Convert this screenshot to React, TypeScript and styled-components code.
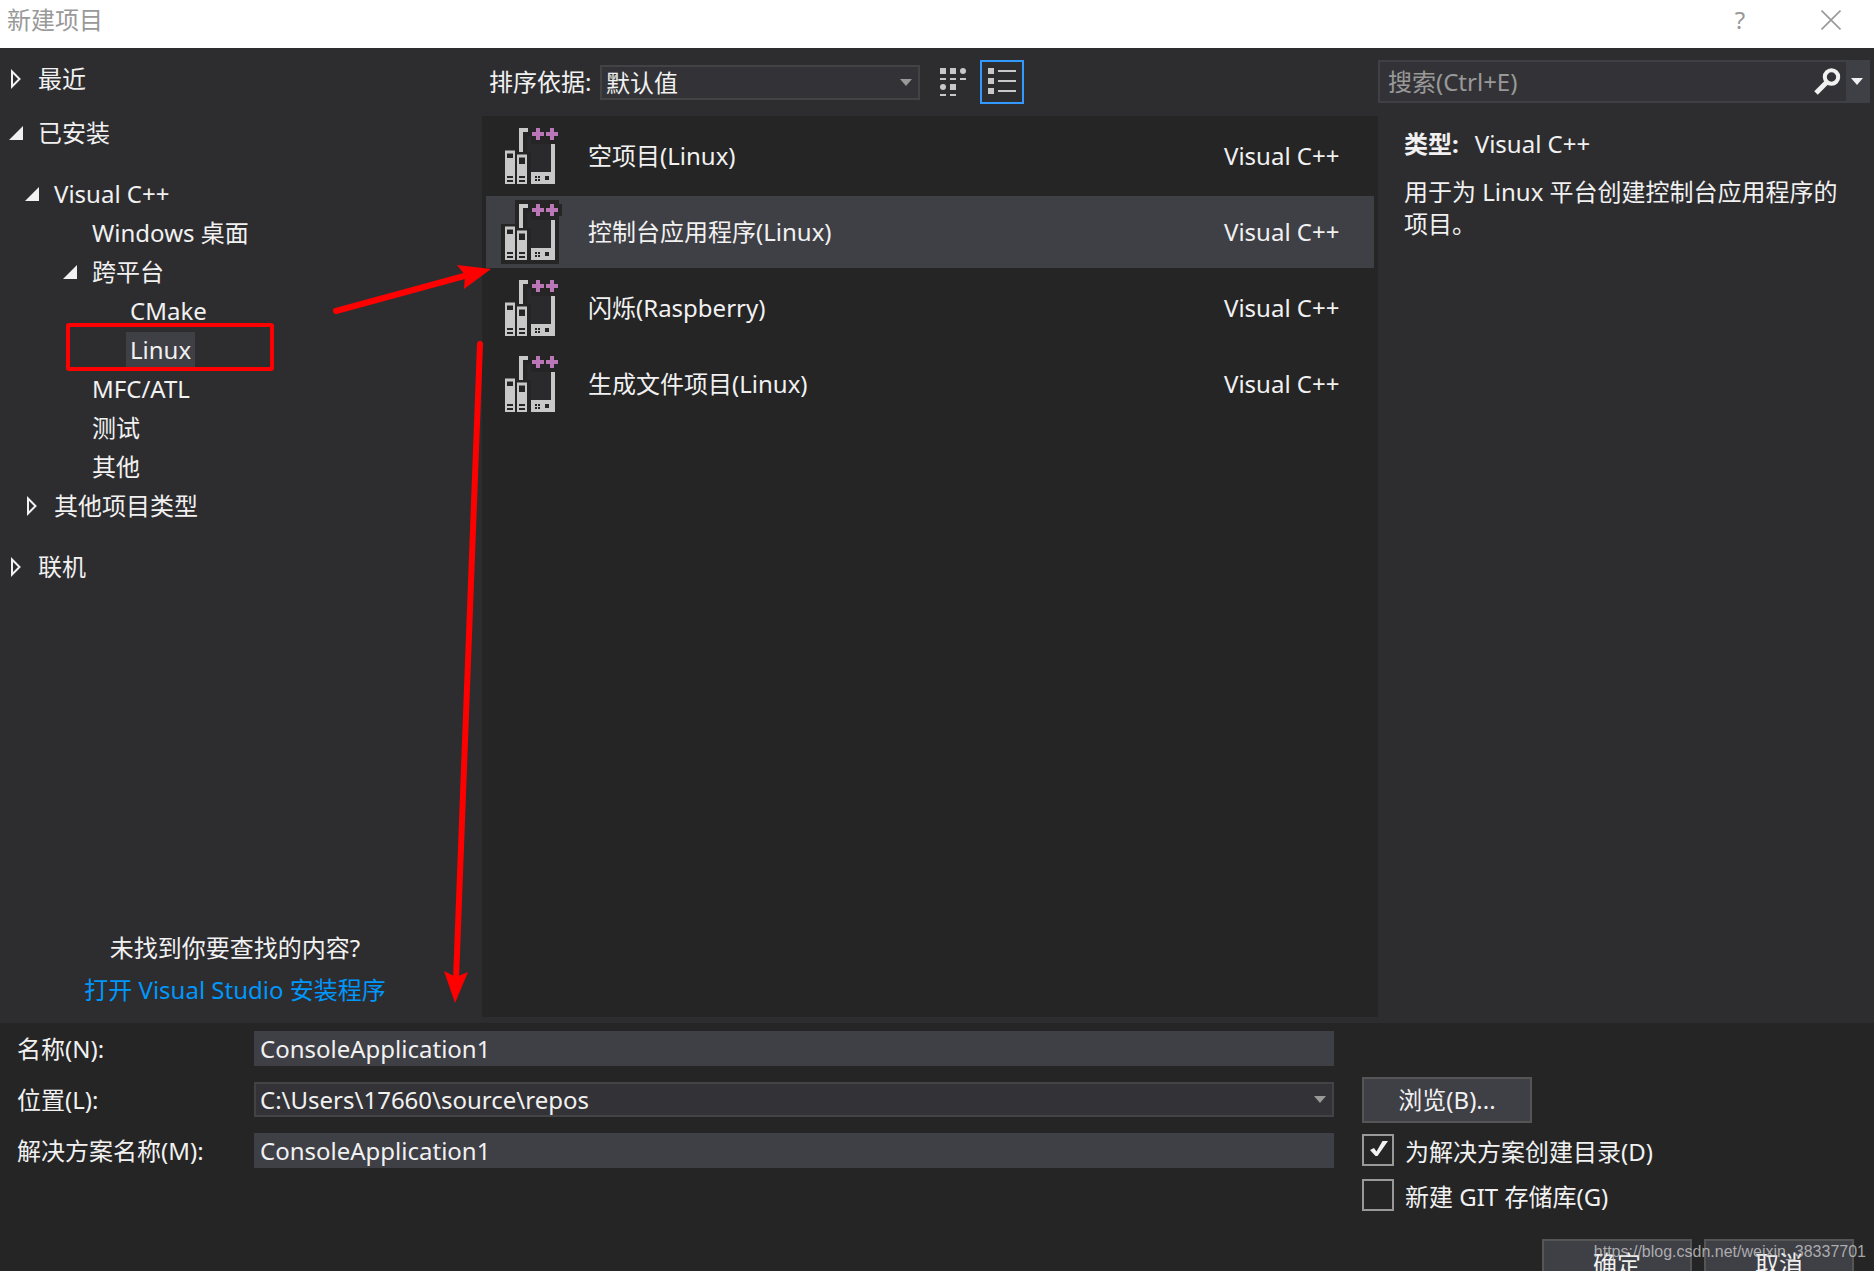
import React, { useState } from "react";
import styled, { createGlobalStyle } from "styled-components";

const c = {
  panel: "#2d2d30",
  dark: "#252526",
  field: "#333337",
  raised: "#3f3f46",
  line: "#434346",
  text: "#f1f1f1",
  dim: "#999999",
  accent: "#3399ff",
  link: "#0097fb",
  mark: "#ff0000",
};

const GlobalStyle = createGlobalStyle`
  * { box-sizing: border-box; }
  html, body { margin: 0; background: ${c.dark}; }
  body, button, input, select {
    font-family: "Noto Sans", "Noto Sans CJK SC", sans-serif;
    font-size: 24px;
    line-height: 32px;
    color: ${c.text};
  }
  button, input, select { margin: 0; padding: 0; border: 0; border-radius: 0; background: none; outline: none; }
  ul { list-style: none; margin: 0; padding: 0; }
`;

const Viewport = styled.div`
  position: relative;
  height: 100vh;
  overflow: hidden;
`;

const Dialog = styled.div`
  display: flex;
  flex-direction: column;
  height: calc(100vh + 24px);
`;

const TitleBar = styled.header`
  display: flex;
  align-items: flex-start;
  gap: 5px;
  flex: none;
  height: 48px;
  padding-left: 7px;
  background: #ffffff;
`;

const Title = styled.h1`
  flex: 1;
  margin: 0;
  padding-top: 4px;
  font-size: 24px;
  font-weight: 400;
  line-height: 32px;
  color: ${c.dim};
`;

const CaptionButton = styled.button`
  display: grid;
  place-items: center;
  width: 86px;
  height: 40px;
  color: ${c.dim};
`;

const Main = styled.main`
  display: grid;
  grid-template-columns: 470px minmax(0, 1fr) 496px;
  flex: 1;
  min-height: 0;
  background: ${c.panel};
`;

const Sidebar = styled.nav`
  display: flex;
  flex-direction: column;
  justify-content: space-between;
  padding: 4px 0 17px;
`;

const Group = styled.ul`
  padding: 14px 0 15px;
`;

const TreeRow = styled.button<{ $level: number }>`
  display: flex;
  align-items: center;
  gap: 14px;
  width: 100%;
  height: ${(p) => (p.$level === 0 ? 54 : 39)}px;
  padding-left: ${(p) => [8, 24, 62, 100][p.$level]}px;
  text-align: left;
`;

const TreeLabel = styled.span<{ $selected?: boolean }>`
  margin-left: -4px;
  padding: 2px 4px;
  background: ${(p) => (p.$selected ? c.raised : "transparent")};
`;

const Twisty = styled.svg`
  flex: none;
  width: 16px;
  height: 20px;
`;

const Hint = styled.div`
  display: flex;
  flex-direction: column;
  align-items: center;
  gap: 10px;
`;

const Link = styled.a`
  color: ${c.link};
  text-decoration: none;
`;

const Center = styled.section`
  display: flex;
  flex-direction: column;
  padding: 12px 0 6px 12px;
`;

const Toolbar = styled.div`
  display: flex;
  align-items: center;
  height: 44px;
  margin-bottom: 12px;
  padding-left: 7px;
`;

const SortLabel = styled.label`
  width: 111px;
  white-space: nowrap;
`;

const Combo = styled.span<{ $width?: string }>`
  display: grid;
  align-items: center;
  width: ${(p) => p.$width ?? "auto"};
  height: 35px;
  border: 2px solid ${c.line};
  background: ${c.field};
  > * { grid-area: 1 / 1; }
  > svg { justify-self: end; margin-right: 6px; pointer-events: none; }
`;

const Select = styled.select`
  appearance: none;
  width: 100%;
  height: 31px;
  padding: 0 24px 0 4px;
`;

const ViewButton = styled.button<{ $active?: boolean }>`
  display: grid;
  place-items: center;
  width: 44px;
  height: 44px;
  border: 2px solid ${(p) => (p.$active ? c.accent : "transparent")};
`;

const ViewButtons = styled.div`
  display: flex;
  gap: 4px;
  margin-left: 12px;
`;

const Templates = styled.ul`
  display: flex;
  flex-direction: column;
  flex: 1;
  gap: 4px;
  padding: 4px;
  background: ${c.dark};
`;

const Template = styled.button<{ $selected: boolean }>`
  display: flex;
  align-items: center;
  width: 100%;
  height: 72px;
  padding: 0 26px 0 12px;
  background: ${(p) => (p.$selected ? c.raised : "transparent")};
`;

const TemplateName = styled.span`
  flex: 1;
  margin-left: 26px;
  text-align: left;
`;

const TemplateKind = styled.span`
  width: 124px;
  text-align: left;
`;

const Details = styled.aside`
  padding: 12px 4px 0 0;
`;

const Search = styled.form`
  display: flex;
  align-items: stretch;
  height: 43px;
  border: 2px solid ${c.raised};
  background: ${c.field};
`;

const SearchInput = styled.input`
  flex: 1;
  min-width: 0;
  padding-left: 8px;
  &::placeholder { color: ${c.dim}; opacity: 1; }
`;

const SearchButton = styled.button<{ $menu?: boolean }>`
  display: grid;
  place-items: center;
  width: ${(p) => (p.$menu ? 22 : 38)}px;
  background: ${(p) => (p.$menu ? c.raised : "transparent")};
`;

const Info = styled.div`
  padding: 25px 26px 0;
`;

const Kind = styled.p`
  display: flex;
  gap: 16px;
  margin: 0 0 16px;
`;

const Description = styled.p`
  margin: 0;
`;

const Footer = styled.footer`
  flex: none;
  padding: 8px 20px 6px 17px;
  background: ${c.dark};
`;

const Form = styled.form`
  display: grid;
  grid-template-columns: 237px minmax(0, 1fr) 520px;
`;

const Fields = styled.div`
  display: grid;
  grid-column: 1 / 3;
  grid-template-columns: subgrid;
  grid-auto-rows: 35px;
  row-gap: 16px;
  align-items: center;
`;

const TextField = styled.input`
  width: 100%;
  height: 35px;
  padding: 0 6px;
  background: ${c.raised};
`;

const Options = styled.div`
  display: flex;
  flex-direction: column;
  align-items: flex-start;
  gap: 7px;
  padding: 46px 0 0 28px;
`;

const PushButton = styled.button<{ $width: number; $height: number }>`
  width: ${(p) => p.$width}px;
  height: ${(p) => p.$height}px;
  border: 2px solid #555555;
  background: ${c.raised};
`;

const CheckLabel = styled.label`
  display: flex;
  align-items: flex-start;
  gap: 11px;
  height: 38px;
  padding-top: 4px;
  line-height: 36px;
`;

const CheckBox = styled.span`
  display: grid;
  > * { grid-area: 1 / 1; }
  > svg { pointer-events: none; }
`;

const CheckInput = styled.input`
  appearance: none;
  width: 32px;
  height: 32px;
  border: 2px solid ${c.dim};
`;

const Actions = styled.div`
  display: flex;
  justify-content: flex-end;
  gap: 12px;
  margin-top: 26px;
`;

const Markup = styled.svg`
  position: absolute;
  top: 0;
  left: 0;
  width: 500px;
  height: 1010px;
  pointer-events: none;
`;

const Watermark = styled.span`
  position: absolute;
  right: 8px;
  bottom: 9px;
  font-family: "Liberation Sans", Arial, sans-serif;
  font-size: 16px;
  line-height: 20px;
  color: rgba(210, 210, 210, 0.75);
`;

const DownArrow = ({ color = c.dim }: { color?: string }) => (
  <svg width="12" height="7" viewBox="0 0 12 7" aria-hidden="true">
    <path d="M0 0H12L6 7Z" fill={color} />
  </svg>
);

const TemplateIcon = () => (
  <svg width="64" height="64" viewBox="0 0 64 64" shapeRendering="crispEdges" aria-hidden="true">
    <path d="M17 0H61V4H64V16H61V64H3V24H17Z" fill={c.dark} />
    <path d="M29 12H33V20H53V48H33V28H29Z" fill="#2a2a2c" />
    <path
      d="M21 4H30V8H25V28H21Z M7 27H17V60H7Z M19 31H29V60H19Z M53 20H57V60H33V48H53Z"
      fill="#c8c8c8"
    />
    <path
      d="M9 30H15V34H9Z M9 52H15V54H9Z M9 56H15V58H9Z M21 34H27V40H21Z M21 52H27V54H21Z M21 56H27V58H21Z M37 52H39V54H37Z M40 52H42V54H40Z M37 55H39V57H37Z M40 55H42V57H40Z M47 52H51V56H47Z"
      fill={c.dark}
    />
    <path d="M9 29H15V30H9Z M21 33H27V34H21Z M7 26H17V27H7Z M19 30H29V31H19Z" fill="#777777" />
    <path
      d="M38 4H42V8H46V12H42V16H38V12H34V8H38Z M52 4H56V8H60V12H56V16H52V12H48V8H52Z"
      fill="#bb76b8"
    />
  </svg>
);

type Node = { label: string; level: number; open?: boolean };

const TreeItem = ({ node, selected, onSelect }: { node: Node; selected: boolean; onSelect: (s: string) => void }) => (
  <li>
    <TreeRow type="button" $level={node.level} aria-expanded={node.open} onClick={() => onSelect(node.label)}>
      <Twisty viewBox="0 0 16 20" aria-hidden="true">
        {node.open === true && <path d="M15 3V17H1Z" fill={c.text} />}
        {node.open === false && <path d="M4 2.5V17.5L11.5 10Z" fill="none" stroke={c.text} strokeWidth="2" />}
      </Twisty>
      <TreeLabel $selected={selected}>{node.label}</TreeLabel>
    </TreeRow>
  </li>
);

const installed: Node[] = [
  { label: "Visual C++", level: 1, open: true },
  { label: "Windows 桌面", level: 2 },
  { label: "跨平台", level: 2, open: true },
  { label: "CMake", level: 3 },
  { label: "Linux", level: 3 },
  { label: "MFC/ATL", level: 2 },
  { label: "测试", level: 2 },
  { label: "其他", level: 2 },
  { label: "其他项目类型", level: 1, open: false },
];

const templates = ["空项目(Linux)", "控制台应用程序(Linux)", "闪烁(Raspberry)", "生成文件项目(Linux)"];

const Check = ({ label, on }: { label: string; on: boolean }) => {
  const [checked, setChecked] = useState(on);
  return (
    <CheckLabel>
      <CheckBox>
        <CheckInput type="checkbox" checked={checked} onChange={() => setChecked(!checked)} />
        {checked && (
          <svg width="32" height="32" viewBox="0 0 32 32" aria-hidden="true">
            <path d="M8 16L12 14L14.500 17.500L20.500 7H26L15.500 22H13.500Z" fill={c.text} />
          </svg>
        )}
      </CheckBox>
      {label}
    </CheckLabel>
  );
};

export default function App() {
  const [node, setNode] = useState("Linux");
  const [template, setTemplate] = useState(1);
  const item = (n: Node) => <TreeItem key={n.label} node={n} selected={node === n.label} onSelect={setNode} />;

  return (
    <Viewport>
      <GlobalStyle />
      <Dialog>
        <TitleBar>
          <Title>新建项目</Title>
          <CaptionButton type="button">?</CaptionButton>
          <CaptionButton type="button" aria-label="关闭">
            <svg width="20" height="20" viewBox="0 0 20 20" aria-hidden="true">
              <path d="M0.500 0.500L19.500 19.500M19.500 0.500L0.500 19.500" stroke={c.dim} strokeWidth="1.6" />
            </svg>
          </CaptionButton>
        </TitleBar>

        <Main>
          <Sidebar>
            <ul>
              {item({ label: "最近", level: 0, open: false })}
              {item({ label: "已安装", level: 0, open: true })}
              <li>
                <Group>{installed.map(item)}</Group>
              </li>
              {item({ label: "联机", level: 0, open: false })}
            </ul>
            <Hint>
              <span>未找到你要查找的内容?</span>
              <Link href="#installer">打开 Visual Studio 安装程序</Link>
            </Hint>
          </Sidebar>

          <Center>
            <Toolbar>
              <SortLabel htmlFor="sort">排序依据:</SortLabel>
              <Combo $width="320px">
                <Select id="sort">
                  <option>默认值</option>
                </Select>
                <DownArrow />
              </Combo>
              <ViewButtons>
                <ViewButton type="button" aria-label="小图标">
                  <svg width="28" height="28" viewBox="0 0 28 28" fill="#c8c8c8" aria-hidden="true">
                    <path d="M0 0H6V6H0Z M10 0H16V6H10Z M0 10H6V12H0Z M10 10H16V12H10Z M20 10H26V12H20Z M10 16H16V22H10Z M0 26H6V28H0Z M10 26H16V28H10Z" />
                    <circle cx="23" cy="3" r="3" />
                    <circle cx="3" cy="19" r="3" />
                  </svg>
                </ViewButton>
                <ViewButton type="button" aria-label="列表" $active>
                  <svg width="28" height="28" viewBox="0 0 28 28" fill="#c8c8c8" aria-hidden="true">
                    <path d="M0 0H6V6H0Z M0 10H6V16H0Z M0 20H6V26H0Z M10 2H28V4H10Z M10 12H28V14H10Z M10 22H28V24H10Z" />
                  </svg>
                </ViewButton>
              </ViewButtons>
            </Toolbar>
            <Templates>
              {templates.map((name, i) => (
                <li key={name}>
                  <Template type="button" $selected={i === template} onClick={() => setTemplate(i)}>
                    <TemplateIcon />
                    <TemplateName>{name}</TemplateName>
                    <TemplateKind>Visual C++</TemplateKind>
                  </Template>
                </li>
              ))}
            </Templates>
          </Center>

          <Details>
            <Search>
              <SearchInput type="text" aria-label="搜索" placeholder="搜索(Ctrl+E)" />
              <SearchButton type="button" aria-label="开始搜索">
                <svg width="28" height="28" viewBox="0 0 28 28" fill="none" stroke={c.text} aria-hidden="true">
                  <circle cx="18.500" cy="9" r="6.700" strokeWidth="4" />
                  <path d="M13.500 14.500L3 25" strokeWidth="5" />
                </svg>
              </SearchButton>
              <SearchButton type="button" aria-label="搜索选项" $menu>
                <DownArrow color={c.text} />
              </SearchButton>
            </Search>
            <Info>
              <Kind>
                <strong>类型:</strong>
                <span>Visual C++</span>
              </Kind>
              <Description>用于为 Linux 平台创建控制台应用程序的项目。</Description>
            </Info>
          </Details>
        </Main>

        <Footer>
          <Form>
            <Fields>
              <label htmlFor="name">名称(N):</label>
              <TextField id="name" defaultValue="ConsoleApplication1" />
              <label htmlFor="location">位置(L):</label>
              <Combo>
                <Select id="location">
                  <option>C:\Users\17660\source\repos</option>
                </Select>
                <DownArrow />
              </Combo>
              <label htmlFor="solution">解决方案名称(M):</label>
              <TextField id="solution" defaultValue="ConsoleApplication1" />
            </Fields>
            <Options>
              <PushButton type="button" $width={170} $height={46}>
                浏览(B)...
              </PushButton>
              <Check label="为解决方案创建目录(D)" on />
              <Check label="新建 GIT 存储库(G)" on={false} />
            </Options>
          </Form>
          <Actions>
            <PushButton type="button" $width={150} $height={50}>
              确定
            </PushButton>
            <PushButton type="button" $width={150} $height={50}>
              取消
            </PushButton>
          </Actions>
        </Footer>
      </Dialog>

      <Markup viewBox="0 0 500 1010" aria-hidden="true">
        <rect x="68" y="325" width="204" height="44" rx="1" fill="none" stroke={c.mark} strokeWidth="4" />
        <g stroke={c.mark} strokeWidth="6" strokeLinecap="round">
          <path d="M336 311L468 275" />
          <path d="M480 344L456 980" />
        </g>
        <path d="M491 269L457 265L465 275L464 289Z" fill={c.mark} />
        <path d="M455 1003L444 971L456 977L468 972Z" fill={c.mark} />
      </Markup>
      <Watermark>https://blog.csdn.net/weixin_38337701</Watermark>
    </Viewport>
  );
}
